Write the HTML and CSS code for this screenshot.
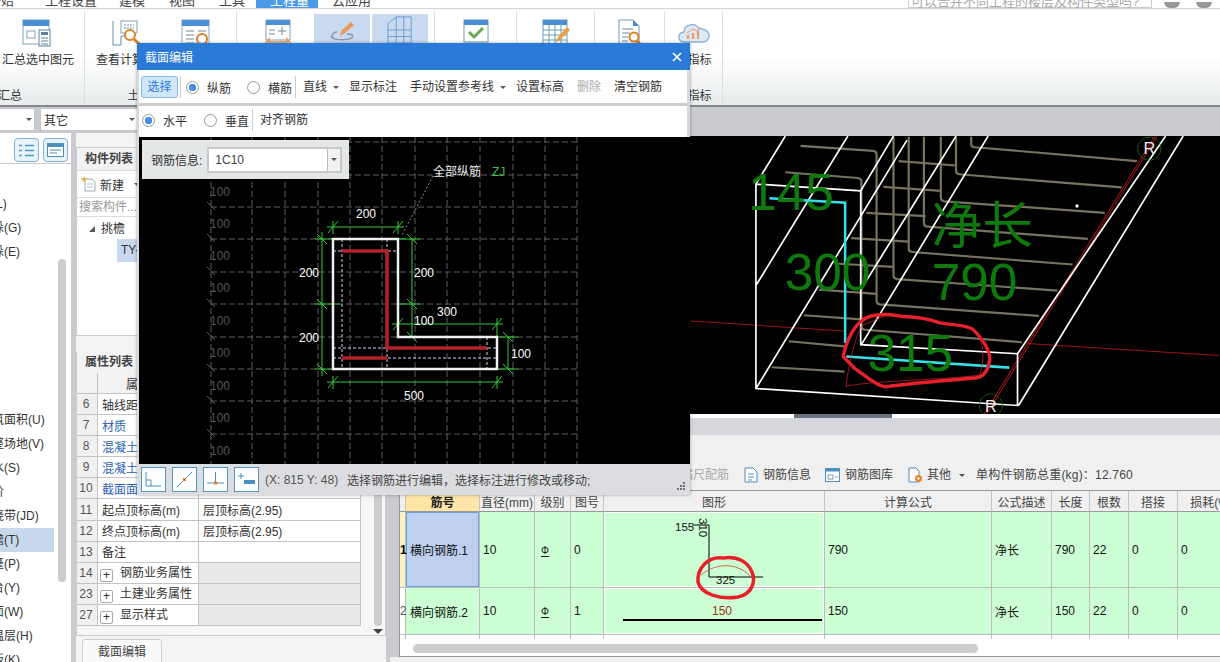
FILE: index.html
```html
<!DOCTYPE html>
<html lang="zh">
<head>
<meta charset="utf-8">
<title>截面编辑</title>
<link rel="stylesheet" href="styles.css">
</head>
<body>
<div class="app">
  <div class="menubar">
    <span class="menu m0">开始</span><span class="menu m1">工程设置</span><span class="menu m2">建模</span><span class="menu m3">视图</span><span class="menu m4">工具</span><span class="menu active">工程量</span><span class="menu m6">云应用</span>
    <span class="searchbox">可以合并不同工程的楼层及构件类型吗?</span>
    <span class="menu-icons"><i></i><i></i><i></i></span>
  </div>

  <div class="ribbon">
    <div class="group g1">
      <div class="btns"><div class="btn w76">
        <svg width="32" height="28" viewBox="0 0 32 28"><rect x="1" y="1" width="26" height="24" fill="#fff" stroke="#7da3b5"/><rect x="1" y="1" width="26" height="6" fill="#4a8fd6"/><rect x="5" y="12" width="8" height="7" fill="none" stroke="#7da3b5"/><rect x="17" y="11" width="11" height="16" fill="#fff" stroke="#5f8296"/><rect x="19" y="13" width="7" height="3" fill="#5f8296"/><path d="M19 19h7M19 22h7M19 25h7" stroke="#5f8296"/></svg>
        <span>汇总选中图元</span></div></div>
      <div class="glabel left">汇总</div>
    </div>
    <div class="group g2">
      <div class="btns">
        <div class="btn w70">
          <svg width="28" height="28" viewBox="0 0 28 28"><path d="M1 2v24h8V17h8" fill="none" stroke="#5f93a8"/><rect x="9" y="2" width="16" height="12" fill="#fff" stroke="#7da3b5"/><path d="M12 6h10M12 9h10" stroke="#6a8ca0" stroke-dasharray="2 1"/><circle cx="18" cy="16" r="5" fill="#fff" stroke="#d9822b" stroke-width="2"/><path d="M22 20l5 5" stroke="#d9822b" stroke-width="3"/></svg>
          <span>查看计算式</span></div>
        <div class="btn w70">
          <svg width="30" height="28" viewBox="0 0 30 28"><rect x="1" y="1" width="27" height="25" fill="#fff" stroke="#8aa8b8"/><rect x="1" y="1" width="27" height="6" fill="#4a8fd6"/><path d="M5 12h8M5 16h8M5 20h8M5 24h8M17 12h8" stroke="#6f8896"/><circle cx="21" cy="20" r="5" fill="#fff" stroke="#d9822b" stroke-width="2"/><path d="M25 24l4 4" stroke="#d9822b" stroke-width="3"/></svg>
        </div>
      </div>
      <div class="glabel">土建计算结果</div>
    </div>
    <div class="group g3">
      <div class="btns">
        <div class="btn w56 first">
          <svg width="30" height="28" viewBox="0 0 30 28"><rect x="3" y="1" width="24" height="20" fill="#fff" stroke="#8aa8b8"/><rect x="3" y="1" width="24" height="5" fill="#4a8fd6"/><path d="M6 11h6M6 15h6M15 12h8M19 8v8" stroke="#6f8896"/><path d="M2 25l4-5v3h18v-3l4 5-4 3v-2H6v2z" fill="none" stroke="#e39a5a" stroke-width="1.600"/></svg>
        </div>
        <div class="btn w56 hl">
          <svg width="30" height="28" viewBox="0 0 30 28"><path d="M4 20c0 5 22 5 22 0-1-2-4-2-6-2" fill="none" stroke="#8c98a6" stroke-width="1.300"/><path d="M6 22c-2-3 0-6 4-6" fill="none" stroke="#8c98a6" stroke-width="1.300"/><path d="M13 20l2-6 9-8 3 3-9 8z" fill="#e79a55"/></svg>
        </div>
        <div class="btn w56 hl">
          <svg width="40" height="30" viewBox="0 0 40 30"><path d="M7 8L16 1V30M7 8V30M7 15H32M7 22H32M16 1H32M24 1V30M32 1V30M7 29H32" fill="none" stroke="#6a9ad0"/></svg>
        </div>
      </div>
      <div class="glabel"></div>
    </div>
    <div class="group g4">
      <div class="btns"><div class="btn w82">
        <svg width="28" height="28" viewBox="0 0 28 28"><rect x="2" y="1" width="24" height="22" fill="#fff" stroke="#6d9eb0"/><rect x="2" y="1" width="24" height="5" fill="#4a8fd6"/><path d="M7 13l5 5 9-9" fill="none" stroke="#6aa84f" stroke-width="3"/></svg>
      </div></div>
      <div class="glabel"></div>
    </div>
    <div class="group g5">
      <div class="btns"><div class="btn w78">
        <svg width="30" height="28" viewBox="0 0 30 28"><rect x="2" y="1" width="24" height="24" fill="#fff" stroke="#6d9eb0"/><rect x="2" y="1" width="24" height="5" fill="#4a8fd6"/><path d="M2 11h24M2 16h24M2 21h24M8 6v19M14 6v19M20 6v19" stroke="#6d9eb0"/><path d="M15 23l2-5 9-10 3 3-10 10z" fill="#e8a040"/></svg>
      </div></div>
      <div class="glabel"></div>
    </div>
    <div class="group g6">
      <div class="btns"><div class="btn w70">
        <svg width="26" height="28" viewBox="0 0 26 28"><path d="M2 1h14l6 6v19H2z" fill="#fff" stroke="#6d9eb0"/><path d="M16 1v6h6z" fill="#4a8fd6"/><path d="M5 10h11M5 14h8M5 18h6M5 22h6" stroke="#6f8896"/><circle cx="17" cy="18" r="4.500" fill="#fff" stroke="#d9822b" stroke-width="2"/><path d="M20 22l4 4" stroke="#d9822b" stroke-width="3"/></svg>
      </div></div>
      <div class="glabel"></div>
    </div>
    <div class="group g7">
      <div class="btns"><div class="btn w58">
        <svg width="34" height="28" viewBox="0 0 34 28"><path d="M8 23c-8 0-8-9-1-10 0-8 12-10 15-3 8-1 12 5 9 10-1 2-3 3-5 3z" fill="#dce9f6" stroke="#8ab0d4" stroke-width="1.300"/><path d="M11 20v-4M16 20v-6M21 20v-8" stroke="#e8a070" stroke-width="2.400"/><path d="M10 14l6-4 4 2 4-4" fill="none" stroke="#e8a070"/></svg>
        <span>云指标</span></div></div>
      <div class="glabel">云指标</div>
    </div>
  </div>

  <div class="workspace">
    <div class="combobar">
      <div class="combo c1"><span></span><b class="caret"></b></div>
      <div class="combo c2"><span>其它</span><b class="caret"></b></div>
    </div>
    <div class="panes">
      <aside class="nav">
        <div class="nav-tools">
          <span class="nav-btn"><svg width="15" height="13" viewBox="0 0 15 13"><path d="M0 1.500h3M0 6.500h3M0 11.500h3M6 1.500h9M6 6.500h9M6 11.500h9" stroke="#4f9bc4" stroke-width="1.500"/></svg></span>
          <span class="nav-btn"><svg width="17" height="14" viewBox="0 0 17 14"><rect x=".5" y=".5" width="16" height="13" fill="#fff" stroke="#4f8fb8"/><rect x=".5" y=".5" width="16" height="3.500" fill="#4f8fb8"/><path d="M3 7h11M3 10h7" stroke="#4f8fb8"/></svg></span>
        </div>
        <div class="nav-body">
          <ul class="nav-list">
            <li>梁(L)</li><li>墙垛(G)</li><li>墙垛(E)</li><li>&nbsp;</li><li>&nbsp;</li><li>&nbsp;</li><li>&nbsp;</li><li>&nbsp;</li><li>&nbsp;</li>
            <li>建筑面积(U)</li><li>平整场地(V)</li><li>散水(S)</li><li>台阶</li><li>后浇带(JD)</li><li class="sel">挑檐(T)</li><li>雨篷(P)</li><li>阳台(Y)</li><li>屋面(W)</li><li>保温层(H)</li><li>栏板(K)</li>
          </ul>
          <div class="nav-scroll"></div>
        </div>
      </aside>

      <section class="middle">
        <div class="panel list-panel">
          <div class="panel-title">构件列表</div>
          <div class="list-tools">
            <svg width="15" height="16" viewBox="0 0 15 16"><path d="M4 3h7l3 3v9H4z" fill="#fff" stroke="#9aa6ad"/><path d="M6 8h6M6 11h6" stroke="#b5bec4"/><path d="M3 0l1 2 2 .5-1.500 1.500.3 2-1.800-1-1.800 1 .3-2L0 2.500 2 2z" fill="#e8b84a"/></svg>
            <span>新建</span><b class="caret"></b>
          </div>
          <div class="list-search">搜索构件...</div>
          <div class="tree-row"><b class="tree-arrow"></b><span>挑檐</span></div>
          <div class="tree-leaf">TY-1</div>
        </div>
        <div class="panel prop-panel">
          <div class="panel-title">属性列表</div>
          <div class="prop-body">
            <table class="props">
              <colgroup><col class="pc1"><col class="pc2"><col class="pc3"></colgroup>
              <tr class="head"><td></td><td class="ctr">属性名称</td><td></td></tr>
              <tr><td class="num">6</td><td>轴线距左边线</td><td></td></tr>
              <tr><td class="num">7</td><td class="blue">材质</td><td></td></tr>
              <tr><td class="num">8</td><td class="blue">混凝土类型</td><td></td></tr>
              <tr><td class="num">9</td><td class="blue">混凝土强度</td><td></td></tr>
              <tr><td class="num">10</td><td class="blue">截面面积</td><td></td></tr>
              <tr><td class="num">11</td><td>起点顶标高(m)</td><td>层顶标高(2.95)</td></tr>
              <tr><td class="num">12</td><td>终点顶标高(m)</td><td>层顶标高(2.95)</td></tr>
              <tr><td class="num">13</td><td>备注</td><td></td></tr>
              <tr class="grp"><td class="num">14</td><td><i class="plus">+</i>钢筋业务属性</td><td></td></tr>
              <tr class="grp"><td class="num">23</td><td><i class="plus">+</i>土建业务属性</td><td></td></tr>
              <tr class="grp"><td class="num">27</td><td><i class="plus">+</i>显示样式</td><td></td></tr>
            </table>
            <div class="prop-scroll"><div class="prop-thumb"></div><b class="prop-arrow"></b></div>
          </div>
        </div>
        <div class="tabstrip"><span class="tab">截面编辑</span></div>
      </section>

      <section class="right">
        <div class="view3d">
          <svg class="scene" width="530" height="278" viewBox="3 18 1568 822">
            <g class="rebars">
              <path d="M835 20v22q0 8 10 9L1325 92"/><path d="M790 20v100q0 10 10 11L1280 170"/><path d="M745 20v180q0 10 10 11L1230 245"/><path d="M695 20v255q0 10 10 11L1180 322"/><path d="M650 20v330q0 10 10 11L1135 398"/><path d="M605 20v410q0 10 10 11L1090 475"/><path d="M330 47L545 62q10 1 10 10V505q0 10 10 11L1035 550"/><path d="M285 125L500 142q10 1 10 10V580q0 10 10 11L985 628"/>
              <path d="M620 92L790 105M575 168L745 180M525 245L700 255M480 320L650 330M430 395L605 405M385 472L555 485M340 548L510 560M295 625L460 640M245 702L460 715"/>
            </g>
            <path class="axis" d="M3 565L460 595M1000 632L1568 667"/>
            <path class="axis" d="M875 850L1385 18M868 850L1378 18"/>
            <path class="white3d" d="M198 160L508 180V635L972 662V815L198 765ZM198 765L645 30M198 460L470 18M198 160L285 18M508 180L605 18M510 470L790 18M510 635L885 18M972 662L1410 18 M975 815L1462 18"/>
            <path class="cyan" d="M238 202L462 215V630M465 670L948 703"/>
            <g class="green3d">
              <text x="175" y="238">145</text><text x="283" y="472">300</text><text x="718" y="338" class="cjk">净长</text><text x="718" y="503">790</text><text x="528" y="713">315</text>
            </g>
            <path class="freehand" d="M456 670C465 630 480 590 510 565C540 540 590 545 620 550C650 555 680 548 740 570C780 578 820 575 840 590C865 615 890 650 890 680C885 715 870 730 850 733C790 740 690 745 580 760C550 755 520 725 490 705Z"/>
            <path class="thinred" d="M465 760C470 700 490 620 510 580L590 545M465 758C560 740 750 740 860 725C875 680 870 640 860 620"/>
            <circle class="rcircle" cx="1362" cy="55" r="34"/><circle class="rcircle" cx="893" cy="815" r="34"/>
            <text class="rlabel" x="1345" y="72">R</text><text class="rlabel" x="876" y="834">R</text>
            <circle cx="1148" cy="225" r="5" fill="#fff"/>
          </svg>
        </div>
        <div class="handle-row"><span class="handle"></span></div>
        <div class="gap-strip"></div>
        <div class="rebar-tools">
          <span class="tool muted">缩尺配筋</span>
          <span class="tool t2"><svg width="14" height="16" viewBox="0 0 14 16"><path d="M1 1h8l4 4v10H1z" fill="#fff" stroke="#4a8fc0"/><path d="M4 7h6M4 10h6M4 13h4" stroke="#4a8fc0"/></svg>钢筋信息</span>
          <span class="tool t3"><svg width="15" height="14" viewBox="0 0 15 14"><rect x=".5" y=".5" width="14" height="13" fill="#fff" stroke="#4a8fc0"/><rect x=".5" y=".5" width="14" height="3" fill="#4a8fc0"/><path d="M3 7h5v4H3zM10 9h3" fill="none" stroke="#7a99b0"/></svg>钢筋图库</span>
          <span class="tool t4"><svg width="15" height="16" viewBox="0 0 15 16"><path d="M1 1h7l3 3v11H1z" fill="#fff" stroke="#4a8fc0"/><circle cx="10.500" cy="11.500" r="3.500" fill="#e8842c"/><circle cx="10.500" cy="11.500" r="1.200" fill="#fff"/></svg>其他<b class="caret"></b></span>
          <span class="tool t5">单构件钢筋总重(kg)：12.760</span>
        </div>
        <div class="grid-wrap">
          <div class="grid-clip">
            <table class="rebar-grid">
              <colgroup><col class="k0"><col class="k1"><col class="k2"><col class="k3"><col class="k4"><col class="k5"><col class="k6"><col class="k7"><col class="k8"><col class="k9"><col class="k10"><col class="k11"></colgroup>
              <tr class="ghead"><th></th><th class="bar-no">筋号</th><th>直径(mm)</th><th>级别</th><th>图号</th><th>图形</th><th>计算公式</th><th>公式描述</th><th>长度</th><th>根数</th><th>搭接</th><th>损耗(%)</th></tr>
              <tr class="r1">
                <td class="idx cur">1</td><td class="barname">横向钢筋.1</td><td>10</td><td class="grade"><span class="rebar">Φ</span></td><td>0</td>
                <td class="shape"><svg class="shape-svg" width="221" height="75" viewBox="604 512 221 75">
                  <path d="M692 525H709V577H763" fill="none" stroke="#000"/>
                  <text class="dim" x="675" y="531">155</text><text class="dim" x="716" y="584">325</text>
                  <text class="dim" transform="translate(699 518) rotate(90)">310</text>
                  <path d="M723 558C708 556 697 568 698 582C701 594 720 600 738 597C752 594 756 582 752 572C748 562 738 556 723 558Z" fill="none" stroke="#e8202c" stroke-width="3.500"/>
                  <path d="M701 575C712 565 735 560 750 576" fill="none" stroke="#c84030" stroke-width=".8"/>
                </svg></td>
                <td>790</td><td>净长</td><td>790</td><td>22</td><td>0</td><td>0</td>
              </tr>
              <tr class="r2">
                <td class="idx">2</td><td class="barname">横向钢筋.2</td><td>10</td><td class="grade"><span class="rebar">Φ</span></td><td>1</td>
                <td class="shape"><svg class="shape-svg" width="221" height="46" viewBox="604 587 221 46">
                  <text class="dim red" x="712" y="614">150</text>
                  <path d="M623 619H822" stroke="#000" stroke-width="2"/>
                </svg></td>
                <td>150</td><td>净长</td><td>150</td><td>22</td><td>0</td><td>0</td>
              </tr>
              <tr class="r3"><td></td><td></td><td></td><td></td><td></td><td></td><td></td><td></td><td></td><td></td><td></td><td></td></tr>
            </table>
          </div>
          <div class="hscroll"><span class="hthumb"></span></div>
        </div>
        <div class="bottom-strip"></div>
      </section>
    </div>
  </div>

  <div class="dialog">
    <div class="dlg-title"><span>截面编辑</span><svg width="10" height="10" viewBox="0 0 10 10"><path d="M1 1l8 8M9 1l-8 8" stroke="#fff" stroke-width="1.600"/></svg></div>
    <div class="dlg-bar bar1">
      <span class="select-btn">选择</span><i class="sep"></i>
      <span class="radio on"></span><span class="rlab">纵筋</span>
      <span class="radio r2nd"></span><span class="rlab">横筋</span><i class="sep s2"></i>
      <span class="dbtn">直线<b class="caret"></b></span>
      <span class="dbtn">显示标注</span>
      <span class="dbtn">手动设置参考线<b class="caret"></b></span>
      <span class="dbtn">设置标高</span>
      <span class="dbtn off">删除</span>
      <span class="dbtn">清空钢筋</span>
    </div>
    <div class="dlg-bar bar2">
      <span class="radio on"></span><span class="rlab">水平</span>
      <span class="radio r2b"></span><span class="rlab">垂直</span><i class="sep s3"></i>
      <span class="dbtn">对齐钢筋</span>
    </div>
    <div class="canvas">
      <svg class="section" width="553" height="327" viewBox="137 137 553 327">
        <path class="gridline" d="M211 142H577M211 175H577M211 207H577M211 239H577M211 272H577M211 304H577M211 337H577M211 369H577M211 401H577M211 434H577M252 137V464M285 137V464M318 137V464M350 137V464M382 137V464M415 137V464M447 137V464M480 137V464M513 137V464M545 137V464M577 137V464M211 137V464"/>
        <g class="gridlab">
          <text x="210" y="196">100</text><text x="210" y="228">100</text><text x="210" y="260">100</text><text x="210" y="292">100</text><text x="210" y="325">100</text><text x="210" y="357">100</text><text x="210" y="390">100</text><text x="210" y="422">100</text><text x="210" y="455">100</text>
        </g>
        <path class="gridtick" d="M207 202l8 8M207 234l8 8M207 267l8 8M207 299l8 8M207 332l8 8M207 364l8 8M207 396l8 8M207 429l8 8"/>
        <path class="leader" d="M433 176L402 235"/>
        <path class="guides" d="M342 239V369M387 239V369M487 337V369M333 251H398M333 348H497M333 358H497"/>
        <path class="dims" d="M333 221V234M398 221V234M327 227H404M328 233l10-12M393 233l10-12
          M315 239H340M315 304H340M315 369H340M322 232V376M317 234l10 10M317 299l10 10M317 364l10 10
          M398 239H420M398 304H420M398 337H420M412 239V337M407 234l10 10M407 299l10 10M407 332l10 10
          M398 318V337M497 318V337M392 324H503M393 330l10-12M492 330l10-12
          M497 337H518M497 369H518M508 337V369M503 332l10 10M503 364l10 10
          M333 376V389M497 376V389M327 382H503M328 388l10-12M492 388l10-12"/>
        <path class="conc" d="M333 239H398V337H497V369H333Z"/>
        <path class="bar" d="M342 251H387V348H487M342 358H387"/>
        <g class="dimtext">
          <text x="356" y="218">200</text><text x="299" y="277">200</text><text x="299" y="342">200</text><text x="414" y="277">200</text><text x="414" y="325">100</text><text x="437" y="316">300</text><text x="511" y="358">100</text><text x="404" y="400">500</text>
        </g>
        <text class="note" x="433" y="176">全部纵筋</text><text class="note zj" x="492" y="176">ZJ</text>
      </svg>
      <div class="info-panel"><label>钢筋信息:</label><div class="info-combo"><span>1C10</span><em><b class="caret"></b></em></div></div>
    </div>
    <div class="dlg-status">
      <span class="sbtn"><svg width="17" height="15" viewBox="0 0 17 15"><path d="M1 0V14H16M1 8H6V14" fill="none" stroke="#4a8fc0"/></svg></span>
      <span class="sbtn"><svg width="17" height="17" viewBox="0 0 17 17"><path d="M1 16L16 1" stroke="#4a8fc0"/><rect x="7" y="7" width="3" height="3" fill="#d9822b"/></svg></span>
      <span class="sbtn"><svg width="19" height="17" viewBox="0 0 19 17"><path d="M1 12H18M9.500 1V12" stroke="#4a8fc0"/><rect x="8" y="10.500" width="3" height="3" fill="#d9822b"/></svg></span>
      <span class="sbtn"><svg width="19" height="17" viewBox="0 0 19 17"><path d="M1 5H7M4 2V8" stroke="#4a8fc0"/><rect x="7" y="9" width="11" height="4" fill="#4a8fc0"/></svg></span>
      <span class="coords">(X: 815 Y: 48)</span>
      <span class="hint">选择钢筋进行编辑，选择标注进行修改或移动;</span>
      <svg class="grip" width="8" height="8" viewBox="0 0 8 8"><path d="M6 0h2v2H6zM3 3h2v2H3zM6 3h2v2H6zM0 6h2v2H0zM3 6h2v2H3zM6 6h2v2H6z" fill="#6f7378"/></svg>
    </div>
  </div>
</div>
</body>
</html>
```
FILE: styles.css
```css
* { box-sizing: border-box; }
html, body { margin: 0; padding: 0; }
body { font-family: "Liberation Sans", "Noto Sans CJK SC", sans-serif; font-size: 12px; color: #333; background: #fff; }
ul { list-style: none; margin: 0; padding: 0; }
svg { display: block; flex: none; }
.app { position: relative; width: 1220px; height: 662px; overflow: hidden; display: flex; flex-direction: column; }

.caret { display: inline-block; width: 0; height: 0; border-left: 3px solid transparent; border-right: 3px solid transparent; border-top: 3px solid #555; margin-left: 7px; vertical-align: middle; }

/* menu */
.menubar { height: 9px; flex: none; display: flex; align-items: flex-end; overflow: hidden; border-bottom: 1px solid #d4d4d4; background: #fff; font-size: 13px; }
.menu { line-height: 14px; height: 14px; flex: none; color: #444; }
.m0 { margin-left: -12px; width: 57px; }
.m1 { width: 74px; }
.m2 { width: 50px; }
.m3 { width: 50px; }
.m4 { width: 37px; }
.active { width: 62px; padding-left: 14px; background: #4a9ae8; color: #fff; }
.m6 { margin-left: 14px; }
.searchbox { margin-left: 537px; width: 244px; height: 14px; line-height: 13px; flex: none; border: 1px solid #ccc; padding-left: 2px; color: #aaa; }
.menu-icons { margin-left: 12px; display: flex; gap: 16px; height: 9px; align-items: flex-end; flex: none; }
.menu-icons i { display: block; width: 16px; height: 6px; background: #999; border-radius: 0 0 6px 6px; }

/* ribbon */
.ribbon { height: 98px; flex: none; display: flex; background: linear-gradient(#fff 50%, #e9eded 96%); border-bottom: 2px solid #85898c; }
.group { display: flex; flex-direction: column; justify-content: space-between; flex: none; border-right: 1px solid #dcdfe0; margin-top: 2px; height: 94px; }
.g1 { width: 85px; }
.g2 { width: 152px; padding-left: 6px; }
.g3 { width: 198px; padding-left: 13px; }
.g4 { width: 82px; }
.g5 { width: 78px; }
.g6 { width: 70px; }
.g7 { width: 58px; }
.btns { display: flex; }
.btn { display: flex; flex-direction: column; align-items: center; margin-top: 3px; padding-top: 5px; color: #333; }
.btn span { margin-top: 5px; line-height: 16px; white-space: nowrap; }
.btn svg { height: 28px; }
.w76 { width: 76px; }
.w70 { width: 70px; }
.w56 { width: 56px; margin-right: 2px; }
.w56.first { margin-right: 8px; }
.w82 { width: 82px; }
.w78 { width: 78px; }
.w58 { width: 58px; }
.hl { background: #c8d9f0; height: 60px; padding-top: 2px; }
.glabel { line-height: 16px; min-height: 16px; margin-bottom: 1px; text-align: center; color: #333; }
.glabel.left { text-align: left; margin-left: -2px; }

/* workspace */
.workspace { flex: 1; min-height: 0; display: flex; flex-direction: column; background: #c9cbd0; }
.combobar { height: 26px; flex: none; display: flex; gap: 5px; padding-top: 1px; }
.combo { height: 23px; background: #fff; border: 1px solid #c4c6c8; display: flex; align-items: center; justify-content: space-between; padding: 0 2px 0 3px; }
.combo .caret { margin-left: 0; }
.c1 { width: 35px; border-left: 0; }
.c2 { width: 98px; }
.panes { flex: 1; min-height: 0; display: flex; }

/* nav */
.nav { width: 72px; flex: none; background: #fff; border-right: 1px solid #ccc; display: flex; flex-direction: column; }
.nav-tools { height: 31px; flex: none; display: flex; gap: 4px; padding: 5px 0 0 14px; border-bottom: 1px solid #ccc; }
.nav-btn { width: 25px; height: 24px; border: 1px solid #7fb3d8; border-radius: 4px; background: #e9f3fb; display: flex; align-items: center; justify-content: center; }
.nav-body { flex: 1; display: flex; min-height: 0; overflow: hidden; }
.nav-list { width: 54px; flex: none; overflow: hidden; padding-top: 28px; }
.nav-list li { height: 24px; line-height: 24px; text-indent: -20px; white-space: nowrap; }
.nav-list .sel { background: #c8d9ee; }
.nav-scroll { width: 8px; height: 323px; margin: 95px 0 0 4px; background: #ccc; border-radius: 4px; flex: none; }

/* middle */
.middle { width: 310px; flex: none; margin-left: 4px; display: flex; flex-direction: column; background: #f4f4f4; }
.panel { background: #fff; border: 1px solid #ccc; }
.list-panel { height: 189px; margin-top: 14px; flex: none; }
.panel-title { height: 23px; line-height: 22px; padding-left: 8px; background: #f2f2f2; font-weight: bold; border-bottom: 1px solid #ddd; color: #444; }
.list-tools { height: 27px; display: flex; align-items: center; padding-left: 4px; gap: 4px; border-bottom: 1px solid #ddd; }
.list-tools .caret { margin-left: 6px; }
.list-search { height: 19px; line-height: 19px; padding-left: 2px; color: #999; border-bottom: 1px solid #ddd; margin-bottom: 2px; }
.tree-row { height: 20px; line-height: 20px; display: flex; align-items: center; padding-left: 12px; gap: 6px; }
.tree-arrow { width: 0; height: 0; border-style: solid; border-width: 0 0 6px 6px; border-color: transparent transparent #555 transparent; }
.tree-leaf { height: 23px; line-height: 23px; margin-left: 40px; padding-left: 4px; background: #c8d9ee; }
.prop-panel { height: 284px; margin-top: 16px; flex: none; border-top: 0; padding-top: 0; }
.prop-panel .panel-title { background: #f2f2f2; height: 21px; line-height: 20px; margin-top: 0; border-bottom: 0; }
.prop-body { display: flex; background: #f6f6f6; height: 262px; }
.props { border-collapse: separate; border-spacing: 0; table-layout: fixed; width: 284px; height: 253px; flex: none; background: #fff; }
.pc1 { width: 21px; }
.pc2 { width: 101px; }
.pc3 { width: 162px; }
.props td { height: 21px; padding: 0 0 0 4px; border-right: 1px solid #c4c4c4; border-bottom: 1px solid #c4c4c4; white-space: nowrap; overflow: hidden; color: #333; }
.props .head td { background: #f2f2f2; }
.props .ctr { text-align: center; }
.props .num { background: #f0f0f0; padding: 0 2px 0 0; text-align: center; color: #555; }
.props .blue { color: #2b63b8; }
.props .grp td:nth-child(3) { background: #e8e8e8; }
.props .grp .plus { display: inline-block; width: 13px; height: 13px; line-height: 11px; border: 1px solid #aaa; border-radius: 2px; background: #fff; font-style: normal; text-align: center; margin: 0 7px 0 -2px; vertical-align: -2px; text-indent: 0; }
.prop-scroll { margin-left: 13px; width: 8px; display: flex; flex-direction: column; align-items: center; }
.prop-thumb { width: 8px; height: 253px; background: #ccc; border-radius: 0 0 4px 4px; flex: none; }
.prop-arrow { margin-top: 3px; width: 0; height: 0; border-left: 5px solid transparent; border-right: 5px solid transparent; border-top: 5px solid #444; }
.tabstrip { flex: 1; padding: 3px 0 0 6px; background: #f4f4f4; }
.tab { display: block; width: 80px; height: 26px; line-height: 24px; text-align: center; background: #fafafa; border: 1px solid #ccc; border-radius: 3px 3px 0 0; color: #444; }

/* right */
.right { flex: 1; min-width: 0; margin-left: 4px; display: flex; flex-direction: column; margin-top: 3px; }
.view3d { height: 278px; flex: none; background: #000; display: flex; justify-content: flex-end; overflow: hidden; }
.rebars path { fill: none; stroke: #77735f; stroke-width: 6.500; }
.axis { fill: none; stroke: #9a1616; stroke-width: 3; }
.white3d { fill: none; stroke: #fff; stroke-width: 5; }
.cyan { fill: none; stroke: #38dfe8; stroke-width: 7.500; }
.green3d text { font-family: "Liberation Sans", sans-serif; font-size: 152px; fill: #0e7a0e; }
.green3d .cjk { font-family: "Noto Sans CJK SC", sans-serif; font-size: 150px; }
.freehand { fill: none; stroke: #e8202c; stroke-width: 10; stroke-linejoin: round; }
.thinred { fill: none; stroke: #d8202c; stroke-width: 2; }
.rcircle { fill: none; stroke: #157a15; stroke-width: 2.500; stroke-dasharray: 10 2; }
.rlabel { font-family: "Liberation Sans", sans-serif; font-size: 48px; fill: #eee; }
.handle-row { height: 4px; background: #fff; flex: none; }
.handle { display: block; width: 98px; height: 4px; margin-left: 404px; background: #6a7480; }
.gap-strip { height: 17px; flex: none; background: #d5d7dc; }
.rebar-tools { height: 55px; flex: none; background: #f0f0f0; display: flex; align-items: flex-end; padding: 0 0 7px 291px; }
.tool { display: flex; align-items: center; gap: 5px; line-height: 16px; height: 16px; white-space: nowrap; flex: none; color: #444; }
.tool.muted { color: #aaa; width: 63px; }
.t2 { width: 81px; }
.t3 { width: 83px; }
.t4 { width: 68px; gap: 4px; }
.t4 .caret { margin-left: 4px; }
.t5 { letter-spacing: .2px; }
.grid-wrap { height: 167px; flex: none; margin-left: 9px; background: #fff; border-left: 1px solid #999; border-bottom: 1px solid #999; border-top: 1px solid #999; display: flex; flex-direction: column; overflow: hidden; }
.grid-clip { height: 148px; flex: none; overflow: hidden; }
.rebar-grid { border-collapse: separate; border-spacing: 0; table-layout: fixed; width: 846px; }
.k0 { width: 6px; } .k1 { width: 74px; } .k2 { width: 55px; } .k3 { width: 36px; } .k4 { width: 33px; } .k5 { width: 221px; }
.k6 { width: 167px; } .k7 { width: 60px; } .k8 { width: 38px; } .k9 { width: 39px; } .k10 { width: 49px; } .k11 { width: 68px; }
.rebar-grid th { height: 21px; padding: 0; font-weight: normal; background: #f0f0f0; color: #444; border-right: 1px solid #c4c4c4; border-bottom: 1px solid #999; white-space: nowrap; overflow: hidden; }
.rebar-grid .bar-no { background: #fde6a8; font-weight: bold; color: #222; }
.rebar-grid td { padding: 0 0 0 3px; background: #ccffd4; border-right: 1px solid #bcbcbc; border-bottom: 1px solid #bcbcbc; color: #111; white-space: nowrap; }
.rebar-grid .idx { padding: 0; background: #fff; font-size: 12px; overflow: visible; color: #555; }
.rebar-grid .idx.cur { background: #fbf3c4; font-weight: bold; color: #000; }
.rebar-grid .barname { padding-left: 4px; }
.rebar-grid .grade { padding-left: 6px; }
.r1 td { height: 75px; }
.r2 td { height: 46px; }
.r3 td { height: 6px; background: #fff; border-bottom: 0; }
.rebar-grid .r3 td { background: #fff; border-bottom: 0; }
.rebar-grid .r1 .barname { background: #bdd0f0; box-shadow: inset 0 0 0 1px #6fa0d8; }
.rebar-grid .shape { padding: 0; box-shadow: inset 0 0 0 1px #fff; }
.shape-svg { overflow: visible; }
.dim { font-family: "Liberation Sans", sans-serif; font-size: 11.500px; fill: #111; }
.dim.red { fill: #a03020; font-size: 12px; }
.rebar { display: inline-block; font-size: 10px; line-height: 10px; border-bottom: 1px solid #111; }
.hscroll { flex: 1; padding: 5px 0 0 13px; }
.hthumb { display: block; width: 565px; height: 9px; background: #ccc; border-radius: 5px; }
.bottom-strip { flex: 1; background: #f0f0f0; }

/* dialog */
.dialog { position: absolute; left: 137px; top: 43px; width: 553px; height: 452px; display: flex; flex-direction: column; background: #d8d9dc; box-shadow: 0 0 3px rgba(0,0,0,.35); }
.dlg-title { height: 27px; flex: none; background: #2a7ad8; color: #fff; display: flex; align-items: center; justify-content: space-between; padding: 0 8px; font-size: 12px; }
.dlg-bar { display: flex; align-items: center; background: #fff; margin: 0 3px 0 2px; flex: none; color: #333; }
.bar1 { height: 36px; border-bottom: 3px solid #ccc; padding-top: 1px; }
.bar2 { height: 31px; padding-bottom: 3px; }
.select-btn { width: 37px; height: 22px; line-height: 20px; margin-left: 2px; text-align: center; color: #2a7ad8; background: #cfe6fb; border: 1px solid #8ab8e0; border-radius: 3px; flex: none; }
.sep { width: 1px; height: 22px; background: #ccc; margin-left: 2px; flex: none; }
.s2 { margin-left: 3px; }
.s3 { margin-left: 3px; }
.radio { width: 13px; height: 13px; border-radius: 50%; border: 1px solid #999; background: #fff; flex: none; margin-left: 5px; margin-right: 8px; }
.radio.on { background: radial-gradient(circle, #4a90e2 0 3.500px, #fff 4px); }
.bar2 .radio.on { margin-left: 3px; }
.r2nd { margin-left: 16px; }
.r2b { margin-left: 17px; }
.rlab { flex: none; }
.dbtn { padding: 0 6px; margin-left: 1px; height: 22px; line-height: 22px; flex: none; white-space: nowrap; }
.bar1 .s2 + .dbtn { margin-left: 1px; }
.dbtn .caret { margin: 0 -3px 0 6px; }
.dbtn.off { color: #aaa; }
.canvas { flex: 1; position: relative; background: #000; min-height: 0; overflow: hidden; margin-left: 2px; }
.canvas .section { margin-left: -2px; }
.gridline { fill: none; stroke: #5e5e5e; stroke-dasharray: 6 3; }
.gridtick { fill: none; stroke: #5e5e5e; }
.gridlab text { font-size: 12px; fill: #555; }
.leader { fill: none; stroke: #888; stroke-dasharray: 2 2; }
.guides { fill: none; stroke: #cfd0f0; stroke-dasharray: 3 2; }
.dims { fill: none; stroke: #37c837; }
.conc { fill: none; stroke: #f0f0f0; stroke-width: 2.500; }
.bar { fill: none; stroke: #b22226; stroke-width: 3.500; }
.dimtext text { font-size: 12px; fill: #fff; }
.note { font-size: 12px; fill: #eee; }
.zj { fill: #3fc04f; }
.info-panel { position: absolute; left: 3px; top: 3px; width: 207px; height: 39px; background: #e4e7e8; display: flex; align-items: center; padding-left: 9px; gap: 5px; color: #333; }
.info-panel label { flex: none; }
.info-combo { width: 135px; height: 26px; border: 2px solid #c8c8c8; background: #fff; display: flex; align-items: center; justify-content: space-between; }
.info-combo span { padding-left: 6px; color: #444; }
.info-combo em { width: 13px; height: 100%; border-left: 1px solid #bbb; display: flex; align-items: center; justify-content: center; background: #f2f2f2; }
.info-combo .caret { margin: 0; }
.dlg-status { height: 31px; flex: none; display: flex; align-items: center; background: #dcdde0; padding-left: 4px; color: #444; }
.sbtn { width: 25px; height: 25px; margin-right: 6px; background: #fff; border: 1px solid #4f97c4; display: flex; align-items: center; justify-content: center; flex: none; }
.coords { width: 82px; flex: none; color: #555; }
.hint { flex: none; white-space: nowrap; }
.grip { margin-left: auto; margin-right: 5px; margin-top: 12px; }
```
